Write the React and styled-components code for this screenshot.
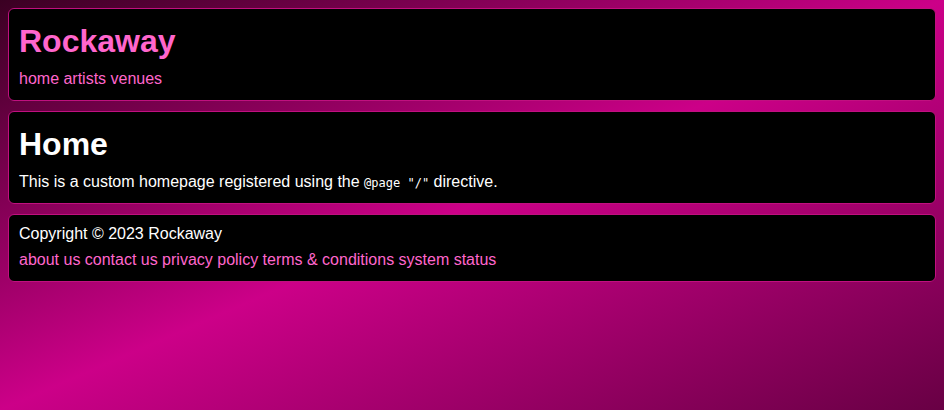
import React from 'react';
import styled, { createGlobalStyle } from 'styled-components';

const GlobalStyle = createGlobalStyle`
  html {
    height: 100%;
    background: linear-gradient(to bottom right, #3a0022 0%, #cc0088 50%, #680044 100%);
  }
  body {
    margin: 0;
    padding: 8px;
    font-family: "Liberation Sans", Arial, sans-serif;
    font-size: 16px;
    color: #fff;
  }
`;

const Page = styled.div`
  display: flex;
  flex-direction: column;
  gap: 10px;
`;

const Card = styled.section`
  display: flex;
  flex-direction: column;
  gap: 8px;
  background: #000;
  border: 1px solid #c0107f;
  border-radius: 6px;
  padding: 10px 10px 12px;
`;

const Title = styled.h1`
  margin: 3px 0 2px;
  font-size: 32px;
  line-height: 38px;
  font-weight: bold;
  color: ${(p) => p.$color || '#fff'};
`;

const Text = styled.p`
  margin: 0;
`;

const Code = styled.code`
  font-family: "DejaVu Sans Mono", "Liberation Mono", monospace;
  font-size: 12px;
  white-space: pre;
`;

const Links = styled.nav`
  display: flex;
  gap: 4.4px;
`;

const Link = styled.a`
  color: #ff66cc;
  text-decoration: none;
`;

export default function App() {
  return (
    <>
      <GlobalStyle />
      <Page>
        <Card>
          <Title $color="#ff66cc">Rockaway</Title>
          <Links>
            <Link href="#">home</Link>
            <Link href="#">artists</Link>
            <Link href="#">venues</Link>
          </Links>
        </Card>
        <Card>
          <Title>Home</Title>
          <Text>
            This is a custom homepage registered using the <Code>@page "/"</Code> directive.
          </Text>
        </Card>
        <Card>
          <Text>Copyright © 2023 Rockaway</Text>
          <Links>
            <Link href="#">about us</Link>
            <Link href="#">contact us</Link>
            <Link href="#">privacy policy</Link>
            <Link href="#">terms &amp; conditions</Link>
            <Link href="#">system status</Link>
          </Links>
        </Card>
      </Page>
    </>
  );
}
